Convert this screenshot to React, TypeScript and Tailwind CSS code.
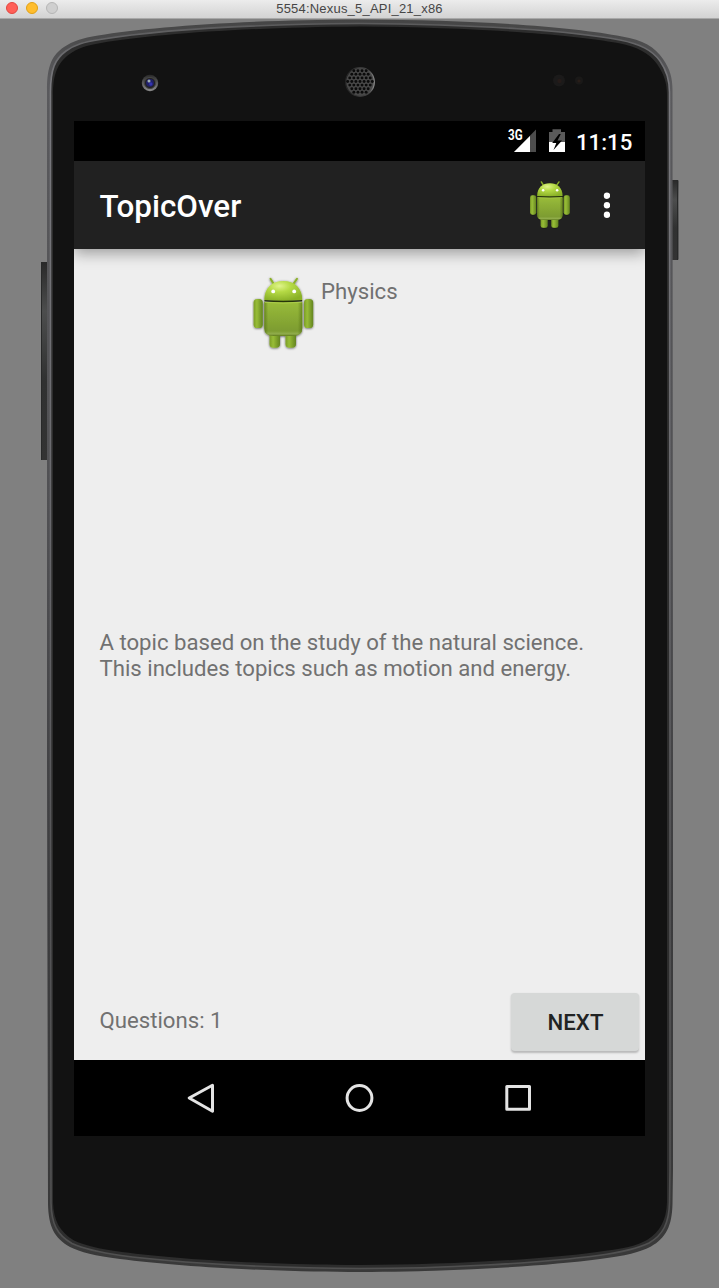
import React from "react";

function Robot({ id, className }: { id: string; className: string }) {
  const limb = `url(#${id}-limb)`;
  return (
    <svg viewBox="252 276 63 75" className={className} preserveAspectRatio="none" aria-label="Android">
      <defs>
        <linearGradient id={`${id}-limb`} x1="0" x2="1">
          <stop offset="0" stopColor="#7b9d27" />
          <stop offset="0.35" stopColor="#98bd37" />
          <stop offset="1" stopColor="#638420" />
        </linearGradient>
        <linearGradient id={`${id}-body`} x1="0" x2="0" y1="0" y2="1">
          <stop offset="0" stopColor="#9abd38" />
          <stop offset="0.25" stopColor="#90b237" />
          <stop offset="0.85" stopColor="#7d9c30" />
          <stop offset="0.94" stopColor="#91ad4c" />
          <stop offset="1" stopColor="#5f7a1c" />
        </linearGradient>
        <linearGradient id={`${id}-side`} x1="0" x2="1">
          <stop offset="0" stopColor="#4d6a12" stopOpacity="0.6" />
          <stop offset="0.1" stopColor="#4d6a12" stopOpacity="0" />
          <stop offset="0.88" stopColor="#4d6a12" stopOpacity="0" />
          <stop offset="1" stopColor="#4d6a12" stopOpacity="0.6" />
        </linearGradient>
        <radialGradient id={`${id}-head`} cx="0.4" cy="0.25" r="0.75">
          <stop offset="0" stopColor="#e0f48c" />
          <stop offset="0.4" stopColor="#b5da45" />
          <stop offset="1" stopColor="#8ab128" />
        </radialGradient>
        <filter id={`${id}-shadow`} x="-10%" y="-10%" width="120%" height="120%">
          <feDropShadow dx="0" dy="0.6" stdDeviation="0.8" floodColor="#000" floodOpacity="0.6" />
        </filter>
      </defs>
      <g filter={`url(#${id}-shadow)`}>
        <path d="M270.5 278.8L274 284.5M297 278.8L293 284.5" stroke="#8bb029" strokeWidth="2" strokeLinecap="round" />
        <rect x="269.5" y="330" width="10.5" height="17.8" rx="3.8" fill={limb} />
        <rect x="285.5" y="330" width="10.5" height="17.8" rx="3.8" fill={limb} />
        <rect x="253.6" y="299" width="9.2" height="29" rx="3.6" fill={limb} />
        <rect x="304" y="299" width="9.2" height="29" rx="3.6" fill={limb} />
        <path d="M264.3 302H302.3V328Q302.3 336 293 336H273.5Q264.3 336 264.3 328Z" fill={`url(#${id}-body)`} />
        <path d="M264.3 302H302.3V328Q302.3 336 293 336H273.5Q264.3 336 264.3 328Z" fill={`url(#${id}-side)`} />
        <path d="M264.3 300C264.3 288 272 281 283.3 281S302.3 288 302.3 300Q283 301.8 264.3 300Z" fill={`url(#${id}-head)`} />
      </g>
      <path d="M264.4 300.8Q283 302.4 302.2 300.8" fill="none" stroke="#26350a" strokeWidth="1.5" />
      <path d="M265 302.3Q283 303.9 301.6 302.3" fill="none" stroke="#b0d150" strokeWidth="0.8" />
      <circle cx="273.2" cy="291.4" r="1.9" fill="#fff" />
      <circle cx="294.2" cy="291.4" r="1.9" fill="#fff" />
    </svg>
  );
}

const grille: [number, number][] = [];
for (let row = -3; row <= 3; row++) {
  for (let col = -4; col <= 4; col++) {
    const x = col * 4.1 + (row % 2 ? 2.05 : 0);
    const y = row * 3.6;
    if (Math.hypot(x, y) < 12.8) grille.push([360 + x, 81.5 + y]);
  }
}

function PhoneShell() {
  return (
    <svg className="pointer-events-none absolute inset-0 h-[1288px] w-[719px]" viewBox="0 0 719 1288">
      <defs>
        <linearGradient id="rim" x1="0" y1="0" x2="0" y2="1">
          <stop offset="0" stopColor="#454545" />
          <stop offset="0.05" stopColor="#5a5a5d" />
          <stop offset="0.4" stopColor="#505053" />
          <stop offset="0.7" stopColor="#3c3c3e" />
          <stop offset="1" stopColor="#393939" />
        </linearGradient>
        <linearGradient id="rimLight" x1="0" y1="0" x2="0" y2="1">
          <stop offset="0" stopColor="#5b5b5c" />
          <stop offset="0.05" stopColor="#7a7a7f" />
          <stop offset="0.4" stopColor="#68686c" />
          <stop offset="0.7" stopColor="#545456" />
          <stop offset="1" stopColor="#505050" />
        </linearGradient>
        <linearGradient id="key" x1="0" y1="0" x2="0" y2="1">
          <stop offset="0" stopColor="#292929" />
          <stop offset="0.25" stopColor="#4c4d4d" />
          <stop offset="0.6" stopColor="#303131" />
          <stop offset="1" stopColor="#333" />
        </linearGradient>
        <linearGradient id="lensRing" x1="0" y1="0" x2="0" y2="1">
          <stop offset="0" stopColor="#292929" />
          <stop offset="1" stopColor="#8c8c8c" />
        </linearGradient>
        <linearGradient id="speakerRing">
          <stop offset="0" stopColor="#242424" />
          <stop offset="0.8" stopColor="#454545" />
          <stop offset="1" stopColor="#8a8a8a" />
        </linearGradient>
      </defs>
      <rect x="41" y="262" width="8" height="198" rx="1" fill="url(#key)" />
      <path d="M41.5 262V460" stroke="#282929" />
      <rect x="671" y="180" width="7.5" height="80" rx="1" fill="url(#key)" />
      <path d="M677.5 180V260" stroke="#282929" />
      <path
        d="M47 90C47 66 52 55 64 47C73 41 82 38 98 35.5C150 27 240 20 360 19.5C480 20 575 27 622 36.5C643 40 655 47 663 59C670 69 672.5 78 672.5 90L673 760V1170L672.5 1204C672 1226 666 1238 651 1246.5C641 1252 625 1256 600 1259C540 1267 440 1272 360 1272C280 1272 180 1267 120 1259C95 1256 80 1252 70 1247C54 1238 48.5 1226 48 1204L47 760Z"
        fill="url(#rim)"
      />
      <path
        d="M50.5 92C50.5 69 55 59 66 51C75 44.5 84 42 100 39.5C151 31 240 24.5 360 23.5C480 24.5 573 31 620 40C640 44 652 50 660 61C667 71 669.5 80 669.5 92L670 760V1168L669.5 1203C669 1223 663 1235 649 1243C639 1248 623 1252 598 1255.5C538 1263.5 440 1268.5 360 1268.5C280 1268.5 181 1263.5 121 1255.5C97 1252 82 1248 72 1243.5C57 1235 51.5 1224 51 1203L50.5 760Z"
        fill="#2d2d2d"
        stroke="url(#rimLight)"
        strokeWidth="1.6"
      />
      <path
        d="M53 95C53 73 58 63 69 54.5C78 48 86 45.5 101 43C152 34.5 240 27.5 360 26.5C480 27.5 571 34.5 618 43C637 46.5 649 53 657 64C664 74 667 83 667 95V1202C666.5 1220 660 1232 647 1240C637 1246 621 1249 597 1252C538 1260 440 1265 360 1265C280 1265 182 1260 122 1252C98 1249 84 1245 74 1240.5C60 1232 53.5 1221 53 1202Z"
        fill="#121212"
      />
      <circle cx="150" cy="83" r="8.2" fill="url(#lensRing)" />
      <circle cx="150" cy="83" r="5.6" fill="#222" stroke="#444" />
      <circle cx="150" cy="82.8" r="3.9" fill="#20206a" />
      <circle cx="150.8" cy="84" r="1.7" fill="#3333b0" />
      <circle cx="149" cy="81" r="1.5" fill="#a1b0b4" />
      <circle cx="360" cy="82" r="14.3" fill="#484848" stroke="url(#speakerRing)" strokeWidth="1.3" />
      {grille.map(([x, y], i) => (
        <circle key={i} cx={x} cy={y} r="1.45" fill="#0b0b0b" />
      ))}
      <circle cx="559" cy="80.5" r="6" fill="#1b1a1a" />
      <circle cx="559.5" cy="81" r="2.2" fill="#251b19" />
      <circle cx="579" cy="80.5" r="4" fill="#1a1918" />
      <circle cx="579" cy="81" r="1.6" fill="#281d18" />
    </svg>
  );
}

function StatusBar() {
  return (
    <div className="flex h-10 shrink-0 items-center justify-end bg-black pr-3 text-white">
      <svg className="h-10 w-[61px]" viewBox="507 121 61 40" aria-hidden="true">
        <path d="M536 129.5V152H514Z" fill="#4d4d4d" />
        <path d="M530 136V152H514Z" fill="#fff" />
        <text x="508" y="139.6" fill="#fff" fontFamily="Roboto" fontSize="14" fontWeight="700" textLength="14.6" lengthAdjust="spacingAndGlyphs">3G</text>
        <path d="M549 132H552.5V129.3H561V132H565V152H549Z" fill="#5a5a5a" />
        <path d="M549 142H565V152H549Z" fill="#fff" />
        <path d="M559 134L552.2 143H556.3L553.5 150L562 140.6H557.5L560.8 134Z" fill="#000" />
      </svg>
      <span className="ml-2 mt-[2px] w-[57px] whitespace-nowrap text-[22.2px] font-medium leading-none">11:15</span>
    </div>
  );
}

function ActionBar() {
  return (
    <header className="relative z-10 flex h-[88px] shrink-0 items-center bg-[#212121] pl-[25.5px] pr-[35px] text-white shadow-[0_4px_14px_rgba(0,0,0,0.36)]">
      <h1 className="mt-1 text-[31.4px] font-medium leading-none">TopicOver</h1>
      <Robot id="action" className="ml-auto h-[50px] w-[42px]" />
      <svg className="ml-[29px] h-7 w-[10px]" viewBox="0 0 10 28" fill="#fff" aria-label="More options">
        <circle cx="7" cy="4.7" r="3.2" />
        <circle cx="7" cy="14.3" r="3.2" />
        <circle cx="7" cy="23.8" r="3.2" />
      </svg>
    </header>
  );
}

function NavBar() {
  return (
    <nav className="flex h-[76px] shrink-0 items-center justify-between bg-black px-[113px]">
      <svg className="h-8 w-[29px]" viewBox="187 1082 29 32" fill="none" stroke="#e4e4e4" strokeWidth="3" strokeLinejoin="round">
        <path d="M212.5 1085.2L189.2 1098L212.5 1111.2Z" />
      </svg>
      <svg className="h-8 w-8" viewBox="344 1082 32 32" fill="none" stroke="#e4e4e4" strokeWidth="3">
        <circle cx="359.5" cy="1098" r="12.4" />
      </svg>
      <svg className="h-8 w-[28px]" viewBox="504 1082 28 32" fill="none" stroke="#e4e4e4" strokeWidth="3" strokeLinejoin="round">
        <rect x="506.8" y="1086.6" width="22.7" height="22.7" />
      </svg>
    </nav>
  );
}

export default function App() {
  return (
    <div className="relative h-[1288px] w-[719px] overflow-hidden bg-[#808080] font-['Roboto',sans-serif]">
      <PhoneShell />
      <div className="relative flex h-full flex-col">
        <div className="grid h-[19px] shrink-0 grid-cols-[1fr_auto_1fr] border-b border-[#a8a8a8] bg-gradient-to-b from-[#ececec] to-[#d3d3d3]">
          <div className="flex gap-2 pl-[6px] pt-[2px]">
            <span className="h-3 w-3 rounded-full border border-[#e2463f] bg-[#ff5f57]" />
            <span className="h-3 w-3 rounded-full border border-[#e1a116] bg-[#ffbd2e]" />
            <span className="h-3 w-3 rounded-full border border-[#b6b6b6] bg-[#cfcfcf]" />
          </div>
          <span className="whitespace-nowrap font-['Liberation_Sans',sans-serif] text-[13px] leading-[17px] tracking-[0.2px] text-[#464646]">5554:Nexus_5_API_21_x86</span>
        </div>
        <div className="ml-[74px] mt-[102px] flex h-[1015px] w-[571px] flex-col overflow-hidden">
          <StatusBar />
          <ActionBar />
          <main className="flex min-h-0 grow flex-col bg-[#eee] text-[22.2px] leading-[26px] text-[#717171]">
            <div className="flex pl-[178px] pt-[27px]">
              <Robot id="topic" className="h-[75px] w-[63px]" />
              <span className="ml-[6px] mt-[2px]">Physics</span>
            </div>
            <p className="mt-auto whitespace-nowrap pl-[25.5px] text-[22.17px]">
              A topic based on the study of the natural science.
              <br />
              This includes topics such as motion and energy.
            </p>
            <div className="mt-[312px] flex h-[67px] items-start justify-between pl-[25.5px] pr-[6px]">
              <span className="mt-[14px]">Questions: 1</span>
              <button className="h-[58px] w-[128px] rounded-[4px] bg-[#d6d8d7] pl-px font-medium text-[#212323] shadow-[0_1.5px_2px_rgba(0,0,0,0.22)]">NEXT</button>
            </div>
          </main>
          <NavBar />
        </div>
      </div>
    </div>
  );
}
